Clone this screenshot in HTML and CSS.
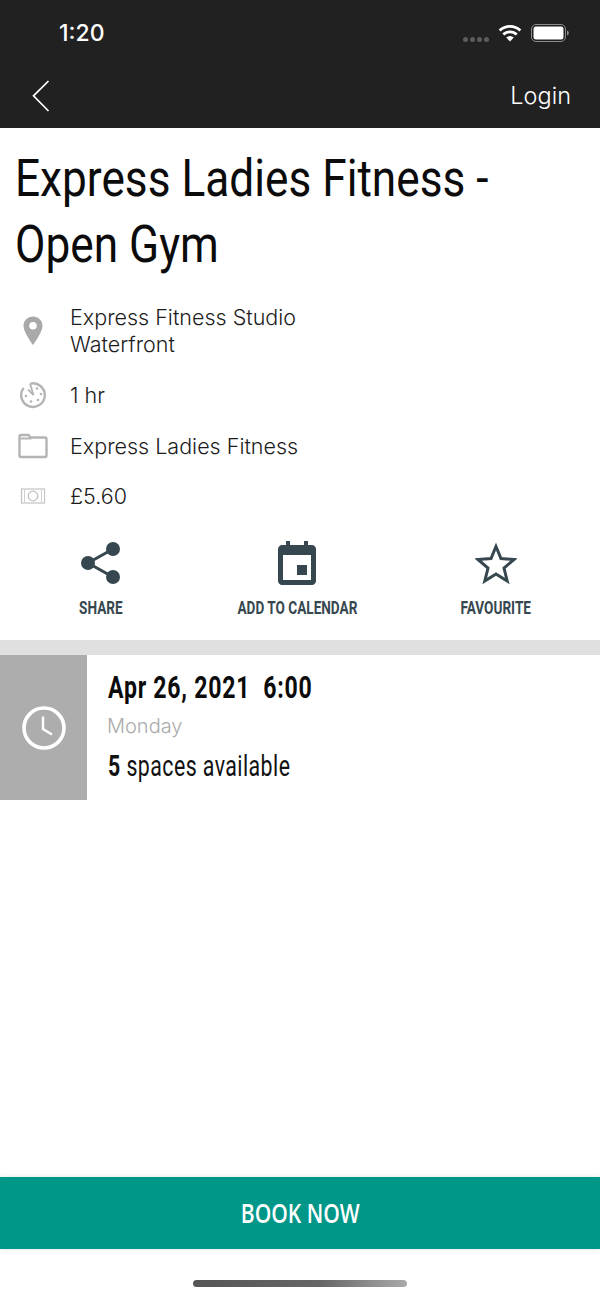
FILE: index.html
```html
<!DOCTYPE html>
<html lang="en">
<head>
<meta charset="utf-8">
<title>Express Ladies Fitness - Open Gym</title>
<link rel="stylesheet" href="styles.css">
</head>
<body>
<div class="screen">
  <header class="topbar">
    <div class="status">
      <span class="time">1:20</span>
      <div class="status-icons">
        <span class="dots"><i></i><i></i><i></i><i></i></span>
        <svg class="wifi" width="24" height="18" viewBox="0 0 24 18"><path d="M12 17.500 8.200 13.400a5.500 5.500 0 0 1 7.600 0Z" fill="#fff"/><path d="M5.300 10.500a9.600 9.600 0 0 1 13.400 0M1.700 6.600a14.800 14.800 0 0 1 20.600 0" fill="none" stroke="#fff" stroke-width="2.800"/></svg>
        <svg class="battery" width="39" height="18" viewBox="0 0 39 18"><rect x=".5" y=".5" width="34" height="17" rx="4.500" fill="none" stroke="#8a8a8a"/><rect x="2.500" y="2.500" width="30" height="13" rx="2.500" fill="#fff"/><path d="M36 6.500v5c1.200-.4 1.800-1.300 1.800-2.500S37.200 6.900 36 6.500Z" fill="#8a8a8a"/></svg>
      </div>
    </div>
    <nav class="nav">
      <svg class="back" width="18" height="32" viewBox="0 0 18 32"><path d="M16.500 1 1.500 15.800 16.500 31" fill="none" stroke="#fff" stroke-width="1.700"/></svg>
      <span class="login">Login</span>
    </nav>
  </header>

  <main class="content">
    <h1 class="title">Express Ladies Fitness -<br>Open Gym</h1>

    <ul class="facts">
      <li class="fact fact-location">
        <svg class="fact-icon" width="30" height="32" viewBox="0 0 30 32"><path fill-rule="evenodd" d="M15 1.500C9.800 1.500 5.500 5.500 5.500 10.800 5.500 17.500 15 30 15 30s9.500-12.500 9.500-19.200C24.500 5.500 20.200 1.500 15 1.500Zm0 13a3.800 3.800 0 1 1 0-7.600 3.800 3.800 0 0 1 0 7.600Z" fill="#a9a9a9"/></svg>
        <span>Express Fitness Studio<br>Waterfront</span>
      </li>
      <li class="fact fact-time">
        <svg class="fact-icon" width="30" height="28" viewBox="0 0 30 28"><path d="M12.500 2.600A11.800 11.800 0 1 1 5.600 7" fill="none" stroke="#b4b4b4" stroke-width="2.400"/><path d="M15.500 14 12 2.500" stroke="#b4b4b4" stroke-width="1.800" fill="none"/><path d="M15.500 14 10 8.500" stroke="#b4b4b4" stroke-width="1.800" fill="none"/><g fill="#b4b4b4"><circle cx="19" cy="7.500" r="1.300"/><circle cx="23" cy="13" r="1.300"/><circle cx="20" cy="19" r="1.300"/><circle cx="13" cy="20.500" r="1.300"/><circle cx="8" cy="15" r="1.300"/></g></svg>
        <span>1 hr</span>
      </li>
      <li class="fact fact-folder">
        <svg class="fact-icon" width="30" height="26" viewBox="0 0 30 26"><path d="M1.500 3.500C1.500 2.500 2 2 3 2h7.500l2 2.500H27c1 0 1.500.5 1.500 1.500v16.500c0 1-.5 1.500-1.500 1.500H3c-1 0-1.500-.5-1.500-1.500Z" fill="none" stroke="#b4b4b4" stroke-width="2.400"/><path d="M1.500 5.500h12" stroke="#b4b4b4" stroke-width="2"/></svg>
        <span>Express Ladies Fitness</span>
      </li>
      <li class="fact fact-price">
        <svg class="fact-icon" width="30" height="18" viewBox="0 0 30 18"><rect x="3.500" y="2" width="23" height="14" fill="none" stroke="#c4c4c4" stroke-width="1.200"/><path d="M6.500 2v14M23.500 2v14" stroke="#d0d0d0" stroke-width="1"/><circle cx="15" cy="9" r="4.800" fill="none" stroke="#c0c0c0" stroke-width="1.300"/></svg>
        <span>£5.60</span>
      </li>
    </ul>

    <div class="actions">
      <div class="action">
        <svg width="42" height="46" viewBox="0 0 42 46"><path d="M33 9 8 23l25 14" fill="none" stroke="#37474f" stroke-width="3"/><circle cx="33" cy="9" r="7" fill="#37474f"/><circle cx="8" cy="23" r="7" fill="#37474f"/><circle cx="33" cy="37" r="7" fill="#37474f"/></svg>
        <span>SHARE</span>
      </div>
      <div class="action">
        <svg width="42" height="46" viewBox="0 0 42 46"><path fill-rule="evenodd" d="M10 1h4v4h14V1h4v4h4c2 0 4 2 4 4v32c0 2-2 4-4 4H6c-2 0-4-2-4-4V9c0-2 2-4 4-4h4Zm-3 14v25h28V15Z" fill="#37474f"/><rect x="21" y="25" width="10" height="10" fill="#37474f"/></svg>
        <span>ADD TO CALENDAR</span>
      </div>
      <div class="action">
        <svg width="42" height="46" viewBox="0 0 42 46"><path d="M21 6.500 26 18.500 39 19.500 29 28 32.200 41 21 34 9.800 41 13 28 3 19.500 16 18.500Z" fill="none" stroke="#37474f" stroke-width="3"/></svg>
        <span>FAVOURITE</span>
      </div>
    </div>

    <div class="divider"></div>

    <section class="session">
      <div class="session-side">
        <svg width="44" height="44" viewBox="0 0 44 44"><circle cx="22" cy="22" r="20" fill="none" stroke="#fff" stroke-width="3.600"/><path d="M21 10.500V23l9 5.500" fill="none" stroke="#fff" stroke-width="2.400"/></svg>
      </div>
      <div class="session-info">
        <div class="session-date">Apr 26, 2021&nbsp; 6:00</div>
        <div class="session-day">Monday</div>
        <div class="session-spaces"><b>5</b> spaces available</div>
      </div>
    </section>
  </main>

  <footer class="footer">
    <button class="book"><span>BOOK NOW</span></button>
    <div class="home-wrap"><div class="home"></div></div>
  </footer>
</div>
</body>
</html>
```

FILE: styles.css
```css
* { box-sizing: border-box; }
html, body { margin: 0; padding: 0; background: #fff; }
.screen { width: 600px; height: 1299px; display: flex; flex-direction: column; overflow: hidden; }

.topbar { height: 128px; background: #212121; color: #fff; flex: none; }
.status { height: 64px; display: flex; justify-content: space-between; padding: 21px 30px 0 59px; }
.time { font: 500 23px/24px "Inter", sans-serif; }
.status-icons { display: flex; align-items: flex-start; }
.dots { display: flex; gap: 2px; margin-top: 15.500px; margin-right: 9px; }
.dots i { width: 5px; height: 5px; border-radius: 50%; background: #5c5c5c; }
.wifi { margin-top: 3px; margin-right: 9px; }
.battery { margin-top: 3px; }
.nav { height: 64px; display: flex; justify-content: space-between; align-items: center; padding: 0 29px 0 32px; }
.login { font: 300 23.500px/32px "Inter", sans-serif; }

.content { flex: 1; }
.title { margin: 0 0 0 14.500px; padding-top: 18px; font: 400 52px/66px "Roboto", sans-serif; color: #0b0b0b; transform-origin: left top; transform: scaleX(.85); white-space: nowrap; }

.facts { list-style: none; margin: 26px 0 0; padding: 0; }
.fact { display: flex; align-items: center; padding-left: 18px; font: 300 21.500px/27px "Inter", sans-serif; color: #1c1c1c; }
.fact-icon { flex: none; margin-right: 22px; }
.fact-location { height: 54px; }
.fact-time { height: 26px; margin-top: 24px; }
.fact-folder { height: 26px; margin-top: 25px; }
.fact-price { height: 26px; margin-top: 24px; }

.actions { display: grid; grid-template-columns: 201px 192px 205px; margin-top: 31px; height: 100px; }
.action { display: flex; flex-direction: column; align-items: center; color: #37474f; }
.action span { font: 700 18px/22px "Roboto", sans-serif; transform: scaleX(.755); white-space: nowrap; margin-top: 11px; }

.divider { height: 15px; background: #e0e0e0; }
.session { display: flex; height: 145px; }
.session-side { width: 87px; background: #adadad; display: flex; align-items: center; justify-content: center; }
.session-info { padding: 15px 0 0 21px; }
.session-date { font: 700 31px/36px "Roboto", sans-serif; color: #0b0b0b; transform-origin: left top; transform: scaleX(.745); white-space: nowrap; letter-spacing: 1px; }
.session-day { font: 300 20px/26px "Inter", sans-serif; color: #ababab; margin: 7px 0 0 -1px; }
.session-spaces { font: 400 29px/34px "Roboto", sans-serif; color: #111; transform-origin: left top; transform: scaleX(.735); white-space: nowrap; margin-top: 10px; letter-spacing: .6px; }
.session-spaces b { font-weight: 700; }

.footer { flex: none; height: 122px; }
.book { display: block; width: 100%; height: 72px; border: 0; padding: 0; background: #009688; color: #fff; box-shadow: 0 0 5px rgba(0,0,0,.12); font: 600 27px/70px "Open Sans", sans-serif; }
.book span { display: inline-block; transform: scaleX(.78); white-space: nowrap; }
.home-wrap { display: flex; justify-content: center; padding-top: 31px; }
.home { width: 214px; height: 7px; border-radius: 4px; background: linear-gradient(90deg, #555 0%, #666 60%, #aaa 100%); }
```
